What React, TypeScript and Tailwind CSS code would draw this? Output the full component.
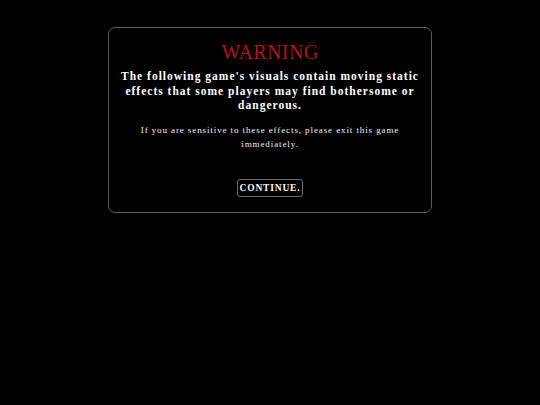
import React from 'react';

const serif = { fontFamily: '"Liberation Serif", "Times New Roman", serif' };

export default function App() {
  return (
    <div className="min-h-[405px] w-full bg-black" style={serif}>
      <div className="flex justify-center pt-[27px]">
        <div className="w-[324px] h-[186px] rounded-[7px] border border-[#5a5a5a] bg-black flex flex-col items-center px-[8px] pt-[12px]">
          <h1 className="text-[20px] leading-[24px] tracking-[0.4px] text-[#b8101a]">WARNING</h1>
          <p className="mt-[5px] text-center text-[11.5px] leading-[14.5px] font-bold tracking-[1px] text-white">
            The following game's visuals contain moving static effects that some players may find bothersome or dangerous.
          </p>
          <p className="mt-[10px] text-center text-[9px] leading-[14px] tracking-[0.9px] text-[#f2f2f2] px-5">
            If you are sensitive to these effects, please exit this game immediately.
          </p>
          <button className="mt-[28px] rounded-[3px] border border-[#6a6a6a] bg-black px-[2px] pt-[2px] pb-[1px] text-[9.5px] leading-[13px] font-bold tracking-[0.8px] text-white">
            CONTINUE.
          </button>
        </div>
      </div>
    </div>
  );
}
